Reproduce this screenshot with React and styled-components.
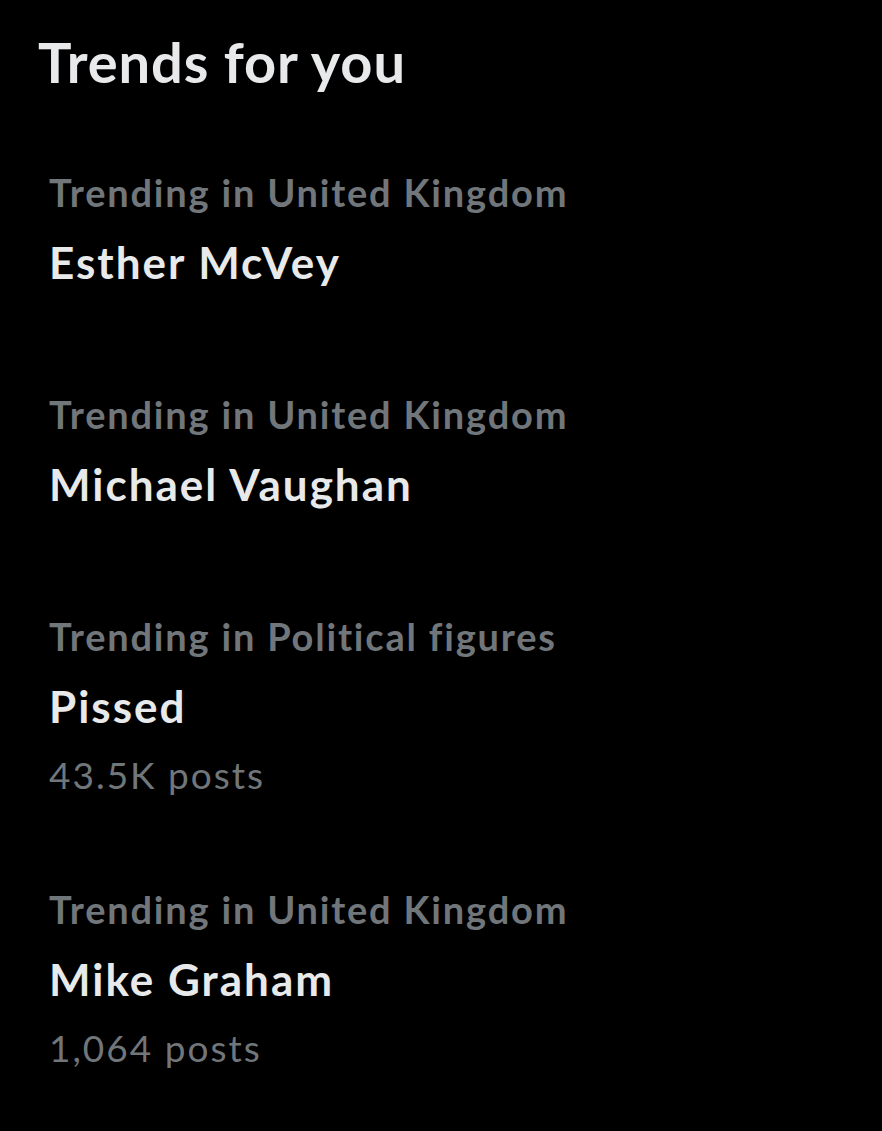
import React from 'react';
import styled, { createGlobalStyle } from 'styled-components';

const trends = [
  { category: 'Trending in United Kingdom', name: 'Esther McVey' },
  { category: 'Trending in United Kingdom', name: 'Michael Vaughan' },
  { category: 'Trending in Political figures', name: 'Pissed', posts: '43.5K posts' },
  { category: 'Trending in United Kingdom', name: 'Mike Graham', posts: '1,064 posts' },
];

const GlobalStyle = createGlobalStyle`
  html, body {
    margin: 0;
    padding: 0;
    background: #000;
  }
  body {
    font-family: Lato, 'Noto Sans', sans-serif;
  }
`;

const Panel = styled.section`
  background: #000;
  min-height: 1131px;
  padding: 26px 0 0 38px;
  box-sizing: border-box;
`;

const Title = styled.h2`
  margin: 0;
  color: #e7e9ea;
  font-size: 56px;
  font-weight: 700;
  line-height: 72px;
  letter-spacing: 0.9px;
`;

const TrendList = styled.ul`
  list-style: none;
  margin: 0;
  padding: 0 0 0 11px;
`;

const TrendItem = styled.li`
  display: flex;
  flex-direction: column;
  padding: ${p => (p.$hasPosts ? '0 0 36px' : '0 0 50px')};
  &:first-child {
    padding-top: 70px;
  }
  & + & {
    padding-top: 50px;
  }
`;

const Category = styled.span`
  color: #71767b;
  font-size: 38px;
  font-weight: 700;
  line-height: 48px;
  letter-spacing: 1.8px;
`;

const Name = styled.span`
  color: #e7e9ea;
  font-size: 44px;
  font-weight: 700;
  line-height: 56px;
  margin-top: 18px;
  letter-spacing: 2px;
`;

const Posts = styled.span`
  color: #71767b;
  font-size: 37px;
  font-weight: 400;
  line-height: 48px;
  margin-top: 17px;
  letter-spacing: 2px;
`;

export default function App() {
  return (
    <>
      <GlobalStyle />
      <Panel>
        <Title>Trends for you</Title>
        <TrendList>
          {trends.map((t, i) => (
            <TrendItem key={i} $hasPosts={!!t.posts}>
              <Category>{t.category}</Category>
              <Name>{t.name}</Name>
              {t.posts && <Posts>{t.posts}</Posts>}
            </TrendItem>
          ))}
        </TrendList>
      </Panel>
    </>
  );
}
